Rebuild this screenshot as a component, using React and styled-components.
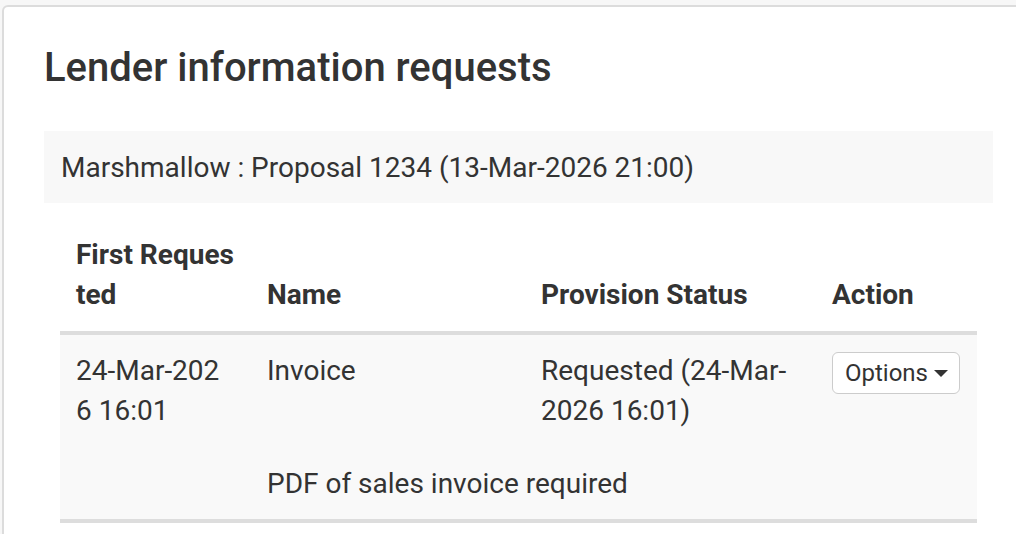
import React from 'react';
import styled, {createGlobalStyle} from "styled-components";

const GlobalStyle = createGlobalStyle`
  html, body {
    margin: 0;
    padding: 0;
    background: #f7f7f7;
    overflow: hidden;
  }

  body {
    font-family: Roboto, "Liberation Sans", Arial, sans-serif;
    color: #333;
  }
`;

const Page = styled.div`
  padding: 5px 0 0 2px;
  height: 534px;
  box-sizing: border-box;
`;

const Card = styled.section`
  width: 1033px;
  min-height: 560px;
  box-sizing: border-box;
  padding: 39px 40px;
  background: #fff;
  border: 2px solid #dcdcdc;
  border-radius: 6px;
`;

const Title = styled.h1`
  margin: 0 0 41px;
  font-size: 40px;
  line-height: 44px;
  font-weight: 500;
  color: #333;
`;

const ProposalBar = styled.div`
  background: #f8f8f8;
  padding: 17px 17px 15px;
  font-size: 28px;
  line-height: 40px;
`;

const TableWrap = styled.div`
  padding: 16px 16px 0;
`;

const Table = styled.table`
  width: 100%;
  table-layout: fixed;
  border-collapse: collapse;
  font-size: 28px;
  line-height: 40px;
`;

const Th = styled.th`
  text-align: left;
  vertical-align: bottom;
  font-weight: 700;
  padding: 16px;
  border-bottom: 4px solid #ddd;
`;

const Row = styled.tr`
  background: #f9f9f9;
  border-bottom: ${({last}) => last ? '4px solid #ddd' : 'none'};
`;

const Td = styled.td`
  vertical-align: top;
  padding: ${({note}) => note ? '17px 16px 15px' : '16px'};
`;

const OptionsButton = styled.button`
  display: inline-flex;
  align-items: center;
  gap: 6px;
  margin-top: 1px;
  padding: 2px 11px 2px 12px;
  font-family: inherit;
  font-size: 24px;
  line-height: 36px;
  color: #333;
  background: #fff;
  border: 1px solid #ccc;
  border-radius: 6px;
  cursor: pointer;
`;

const Caret = styled.span`
  display: inline-block;
  width: 0;
  height: 0;
  border-top: 7px solid #333;
  border-left: 7px solid transparent;
  border-right: 7px solid transparent;
`;

const requests = [
    {
        requested: ['24-Mar-202', '6 16:01'],
        name: 'Invoice',
        status: ['Requested (24-Mar-', '2026 16:01)'],
        note: 'PDF of sales invoice required'
    }
];

const App = () => {
    return (
        <Page>
            <GlobalStyle/>
            <Card>
                <Title>Lender information requests</Title>
                <ProposalBar>Marshmallow : Proposal 1234 (13-Mar-2026 21:00)</ProposalBar>
                <TableWrap>
                    <Table>
                        <colgroup>
                            <col style={{width: 191}}/>
                            <col style={{width: 274}}/>
                            <col style={{width: 291}}/>
                            <col style={{width: 161}}/>
                        </colgroup>
                        <thead>
                        <tr>
                            <Th>First Reques<br/>ted</Th>
                            <Th>Name</Th>
                            <Th>Provision Status</Th>
                            <Th>Action</Th>
                        </tr>
                        </thead>
                        <tbody>
                        {requests.map((item, i) => (
                            <React.Fragment key={i}>
                                <Row>
                                    <Td>{item.requested[0]}<br/>{item.requested[1]}</Td>
                                    <Td>{item.name}</Td>
                                    <Td>{item.status[0]}<br/>{item.status[1]}</Td>
                                    <Td>
                                        <OptionsButton type="button">
                                            Options <Caret/>
                                        </OptionsButton>
                                    </Td>
                                </Row>
                                <Row last>
                                    <Td note/>
                                    <Td note colSpan={3}>{item.note}</Td>
                                </Row>
                            </React.Fragment>
                        ))}
                        </tbody>
                    </Table>
                </TableWrap>
            </Card>
        </Page>
    );
};

export default App;
